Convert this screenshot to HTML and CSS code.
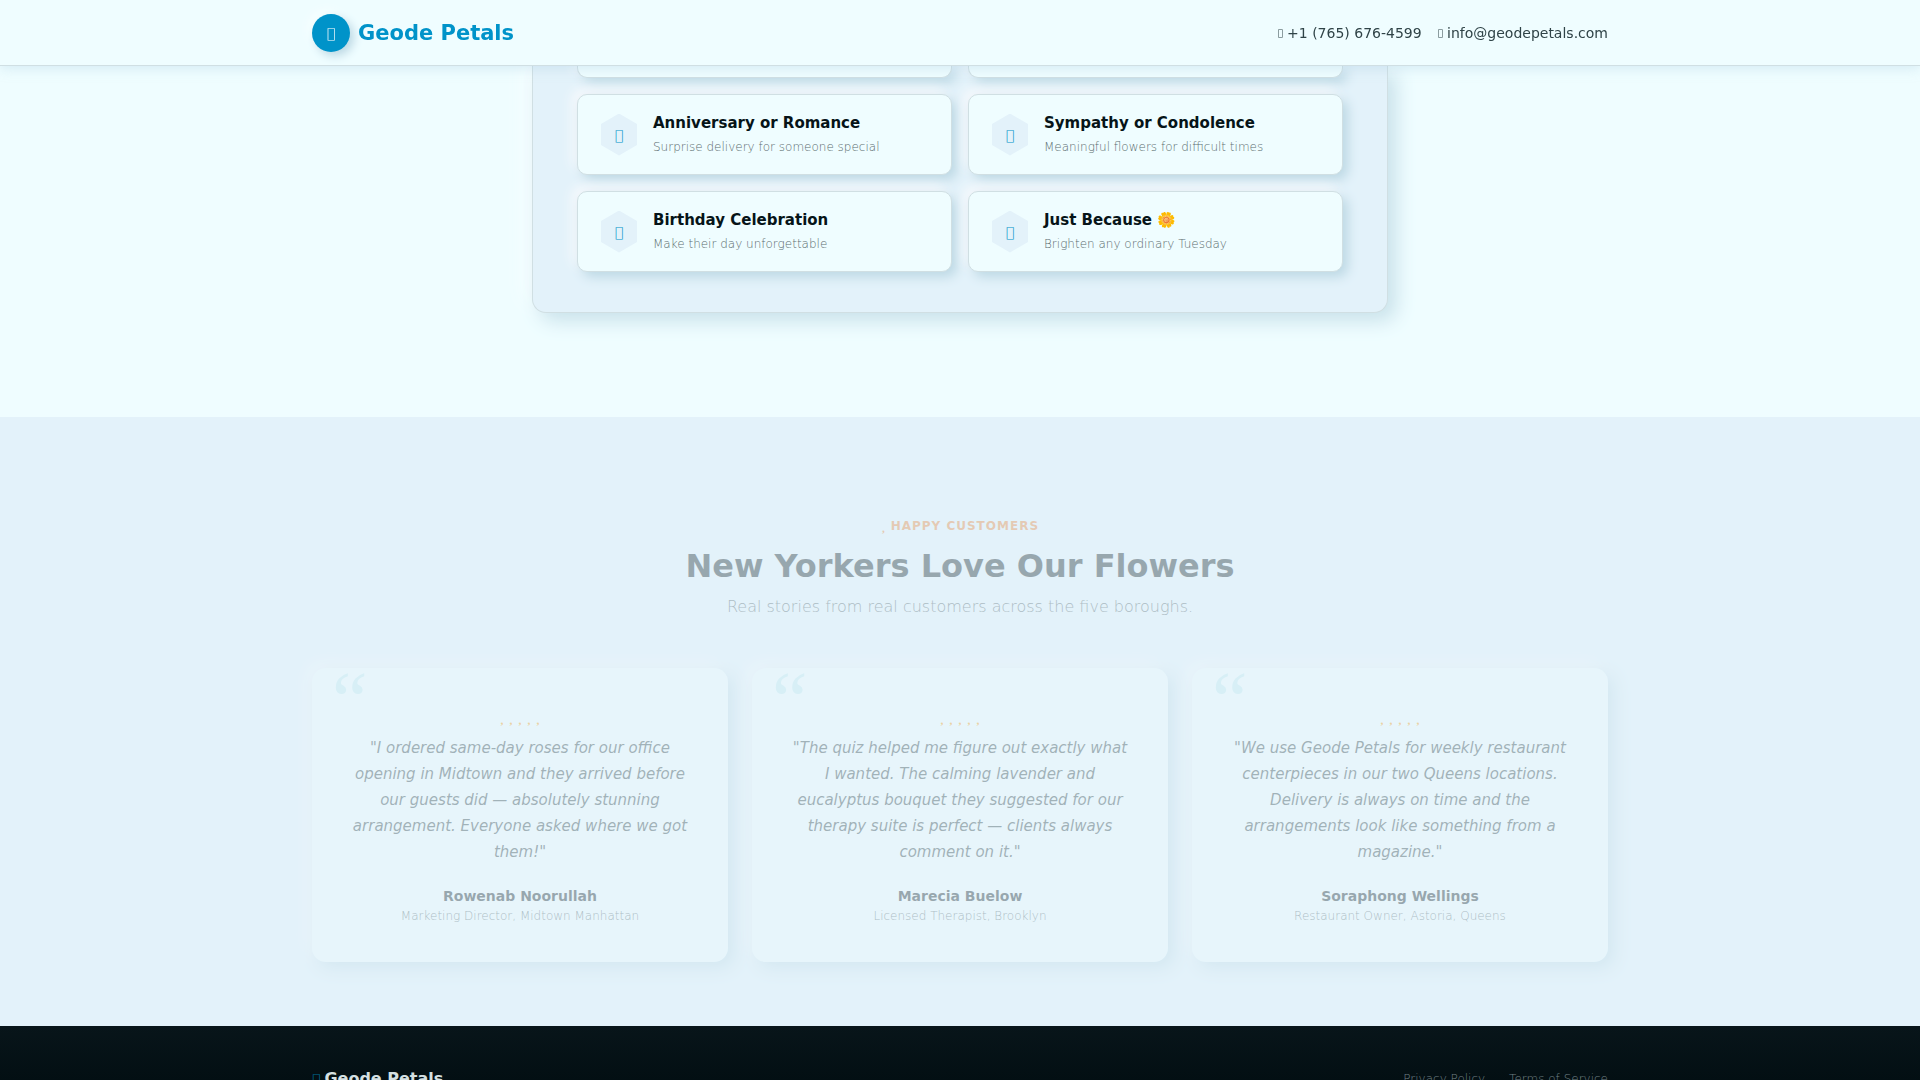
FILE: index.html
```html
<!DOCTYPE html>
<html lang="en">
  <head>
    <meta charset="UTF-8" />
    <meta name="viewport" content="width=device-width, initial-scale=1.0" />
    <title>Geode Petals</title>
    <link rel="stylesheet" href="styles.css">
  </head>
  <body>
    <header class="site-header">
      <div class="container header-inner">
        <a class="brand" href="#">
          <span class="brand-icon icon" aria-hidden="true">&#xf3ee;</span>
          Geode Petals
        </a>
        <nav class="contact">
          <a href="tel:+17656764599"><i class="icon" aria-hidden="true">&#xf5c1;</i>+1 (765) 676-4599</a>
          <a href="mailto:info@geodepetals.com"><i class="icon" aria-hidden="true">&#xf32f;</i>info@geodepetals.com</a>
        </nav>
      </div>
    </header>

    <main>
      <section class="quiz">
        <div class="quiz-panel">
          <div class="option option-tail"></div>
          <div class="option option-tail"></div>
          <button class="option" type="button">
            <span class="hex icon" aria-hidden="true">&#xf3ee;</span>
            <span class="option-text">
              <strong>Anniversary or Romance</strong>
              <small>Surprise delivery for someone special</small>
            </span>
          </button>
          <button class="option" type="button">
            <span class="hex icon" aria-hidden="true">&#xf3ee;</span>
            <span class="option-text">
              <strong>Sympathy or Condolence</strong>
              <small>Meaningful flowers for difficult times</small>
            </span>
          </button>
          <button class="option" type="button">
            <span class="hex icon" aria-hidden="true">&#xf7db;</span>
            <span class="option-text">
              <strong>Birthday Celebration</strong>
              <small>Make their day unforgettable</small>
            </span>
          </button>
          <button class="option" type="button">
            <span class="hex icon" aria-hidden="true">&#xf325;</span>
            <span class="option-text">
              <strong>Just Because 🌼</strong>
              <small>Brighten any ordinary Tuesday</small>
            </span>
          </button>
        </div>
      </section>

      <section class="testimonials">
        <div class="container">
          <div class="section-head fading">
            <p class="eyebrow"><i class="icon" aria-hidden="true">&#xf004;</i>Happy Customers</p>
            <h2>New Yorkers Love Our Flowers</h2>
            <p class="lead">Real stories from real customers across the five boroughs.</p>
          </div>
          <div class="cards">
            <article class="card fading">
              <div class="stars" aria-hidden="true"><i>&#xf004;</i><i>&#xf004;</i><i>&#xf004;</i><i>&#xf004;</i><i>&#xf004;</i></div>
              <p class="quote">"I ordered same-day roses for our office opening in Midtown and they arrived before our guests did — absolutely stunning arrangement. Everyone asked where we got them!"</p>
              <h3>Rowenab Noorullah</h3>
              <p class="role">Marketing Director, Midtown Manhattan</p>
            </article>
            <article class="card fading">
              <div class="stars" aria-hidden="true"><i>&#xf004;</i><i>&#xf004;</i><i>&#xf004;</i><i>&#xf004;</i><i>&#xf004;</i></div>
              <p class="quote">"The quiz helped me figure out exactly what I wanted. The calming lavender and eucalyptus bouquet they suggested for our therapy suite is perfect — clients always comment on it."</p>
              <h3>Marecia Buelow</h3>
              <p class="role">Licensed Therapist, Brooklyn</p>
            </article>
            <article class="card fading">
              <div class="stars" aria-hidden="true"><i>&#xf004;</i><i>&#xf004;</i><i>&#xf004;</i><i>&#xf004;</i><i>&#xf004;</i></div>
              <p class="quote">"We use Geode Petals for weekly restaurant centerpieces in our two Queens locations. Delivery is always on time and the arrangements look like something from a magazine."</p>
              <h3>Soraphong Wellings</h3>
              <p class="role">Restaurant Owner, Astoria, Queens</p>
            </article>
          </div>
        </div>
      </section>
    </main>

    <footer class="site-footer">
      <div class="container footer-inner">
        <div class="footer-brand"><i class="icon" aria-hidden="true">&#xf3ee;</i>Geode Petals</div>
        <nav class="footer-links">
          <a href="#">Privacy Policy</a>
          <a href="#">Terms of Service</a>
        </nav>
      </div>
    </footer>
  </body>
</html>
```

FILE: styles.css
```css
:root {
  --surface: #effdff;
  --mist: #e3f2fa;
  --blue: #0093c9;
  --ink: #061418;
  --muted: #5c6d70;
  --line: #d0dfe3;
  --shade: #bcd8e4;
  --glow: #f7f9fc;
}
* {
  margin: 0;
  padding: 0;
  box-sizing: border-box;
}
body {
  height: 100vh;
  overflow: hidden;
  background: var(--surface);
  color: var(--ink);
  font-family: "DejaVu Sans", sans-serif;
  font-size: 16px;
}
a {
  color: inherit;
  text-decoration: none;
}
.icon {
  font-size: 14px;
  font-style: normal;
  font-weight: 300;
}
.container {
  max-width: 1320px;
  margin: 0 auto;
  padding: 0 12px;
}

/* header */
.site-header {
  position: sticky;
  top: 0;
  z-index: 10;
  background: var(--surface);
  border-bottom: 1px solid var(--line);
  box-shadow: 0 2px 12px rgba(160, 200, 220, 0.35);
}
.header-inner {
  display: flex;
  align-items: center;
  justify-content: space-between;
  height: 65px;
}
.brand {
  display: flex;
  align-items: center;
  gap: 8px;
  color: var(--blue);
  font-size: 21px;
  font-weight: 700;
}
.brand-icon {
  display: flex;
  align-items: center;
  justify-content: center;
  width: 38px;
  height: 38px;
  border-radius: 50%;
  background: var(--blue);
  color: #fff;
  box-shadow: 4px 4px 10px var(--shade), -4px -4px 10px #f7ffff;
}
.contact {
  display: flex;
  gap: 16px;
  color: #2f4347;
  font-size: 14px;
}
.contact .icon {
  margin-right: 4px;
  font-size: 9px;
  font-weight: 400;
  vertical-align: 2px;
}

/* quiz */
.quiz {
  padding: 0 12px 104px;
}
.quiz-panel {
  display: grid;
  grid-template-columns: 1fr 1fr;
  gap: 16px;
  max-width: 856px;
  margin: 0 auto;
  padding: 0 44px 40px;
  background: var(--mist);
  border: 1px solid var(--line);
  border-top: 0;
  border-radius: 0 0 14px 14px;
  box-shadow: 8px 8px 20px #c8e1ea, -8px -8px 20px #f7feff;
}
.option {
  display: flex;
  align-items: center;
  gap: 16px;
  height: 81px;
  padding: 0 23px;
  background: var(--surface);
  border: 1px solid var(--line);
  border-radius: 10px;
  box-shadow: 5px 5px 12px var(--shade), -5px -5px 12px var(--glow);
  color: var(--ink);
  font-family: inherit;
  text-align: left;
  cursor: pointer;
}
.option-tail {
  height: 12px;
  border-top: 0;
  border-radius: 0 0 10px 10px;
}
.hex {
  display: flex;
  align-items: center;
  justify-content: center;
  width: 36px;
  height: 42px;
  background: var(--mist);
  color: var(--blue);
  clip-path: polygon(50% 0, 100% 25%, 100% 75%, 50% 100%, 0 75%, 0 25%);
}
.option-text {
  display: flex;
  flex-direction: column;
  gap: 4px;
}
.option strong {
  font-size: 15px;
  line-height: 20px;
}
.option small {
  color: var(--muted);
  font-size: 12px;
  font-weight: 300;
  line-height: 20px;
}

/* testimonials */
.testimonials {
  padding: 96px 0 64px;
  background: var(--mist);
}
.fading {
  opacity: 0.36;
}
.section-head {
  margin-bottom: 48px;
  text-align: center;
}
.eyebrow {
  color: #e8863a;
  font-size: 12px;
  font-weight: 700;
  letter-spacing: 1px;
  line-height: 24px;
  text-transform: uppercase;
}
.eyebrow .icon {
  margin-right: 4px;
  font-weight: 700;
}
h2 {
  margin: 8px 0;
  color: #14242a;
  font-size: 32px;
  line-height: 40px;
}
.lead {
  color: #4d6065;
  font-size: 16px;
  font-weight: 300;
  line-height: 26px;
}
.cards {
  display: grid;
  grid-template-columns: repeat(3, 1fr);
  gap: 24px;
}
.card {
  position: relative;
  padding: 39px 38px 36px;
  background: var(--surface);
  border-radius: 14px;
  box-shadow: 6px 6px 16px var(--shade), -6px -6px 16px var(--glow);
  text-align: center;
}
.card::before {
  content: "\201C";
  position: absolute;
  top: -8px;
  left: 20px;
  color: #c3eaf0;
  font-family: "Liberation Serif", serif;
  font-size: 80px;
  line-height: 1;
}
.stars {
  display: flex;
  justify-content: center;
  gap: 4px;
  margin-bottom: 8px;
  color: #f59a10;
  font-size: 15px;
  font-weight: 700;
  line-height: 20px;
}
.stars i {
  font-style: normal;
}
.quote {
  margin-bottom: 21px;
  color: #2f4347;
  font-size: 15px;
  font-style: italic;
  line-height: 26px;
}
.card h3 {
  color: #14242a;
  font-size: 14px;
  line-height: 20px;
}
.role {
  color: #4d6065;
  font-size: 12px;
  font-weight: 300;
  line-height: 20px;
}

/* footer */
.site-footer {
  padding: 43px 0;
  background: linear-gradient(#08151a, #030f13 54px);
}
.footer-inner {
  display: flex;
  align-items: center;
  justify-content: space-between;
}
.footer-brand {
  color: #d5e0e2;
  font-weight: 700;
}
.footer-brand .icon {
  margin-right: 4px;
  color: #00709c;
}
.footer-links {
  display: flex;
  gap: 24px;
  color: #718085;
  font-size: 12px;
  font-weight: 300;
}
```
